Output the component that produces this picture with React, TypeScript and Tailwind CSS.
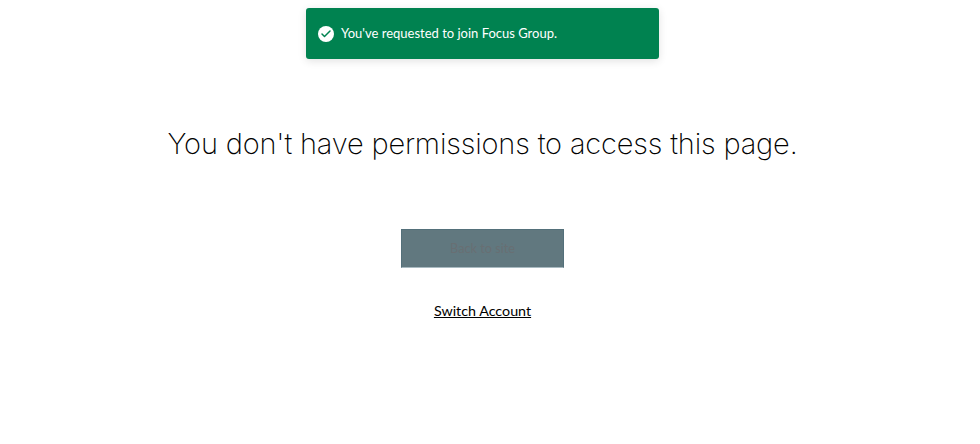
import { Check } from "lucide-react";

export default function App() {
  return (
    <div className="h-[444px] w-[980px] overflow-hidden bg-white font-['Lato',sans-serif]">
      <div className="flex w-[965px] flex-col items-center">
        <div className="mt-2 flex h-[51px] w-[353px] items-center gap-[7px] rounded-[3px] bg-[#008250] pl-3 text-white shadow-[0_2px_8px_rgba(0,0,0,0.12)]">
          <span className="flex h-4 w-4 items-center justify-center rounded-full bg-white text-[#008250]">
            <Check size={12} strokeWidth={3} />
          </span>
          <span className="text-[13px] leading-none">You've requested to join Focus Group.</span>
        </div>
        <h1 className="mt-[65px] font-['Inter',sans-serif] text-[29px] leading-[40px] font-[250] tracking-[-0.17px] text-black">
          You don't have permissions to access this page.
        </h1>
        <button className="mt-[65px] flex h-[39px] w-[163px] items-center justify-center border border-[#54707a] border-b-[#a9bac1] bg-[#61787f] text-[12.7px] text-[#686f73]">
          Back to site
        </button>
        <a className="mt-[33px] text-[14.3px] leading-5 text-black underline" href="#">
          Switch Account
        </a>
      </div>
    </div>
  );
}
